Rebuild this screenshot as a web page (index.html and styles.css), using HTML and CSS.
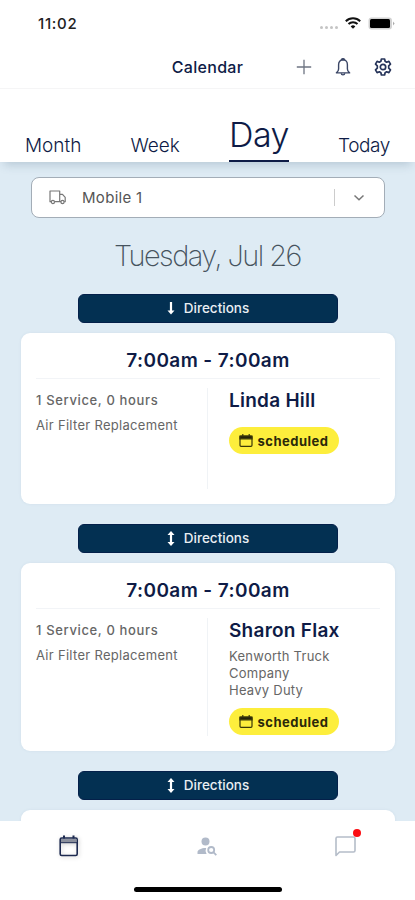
FILE: index.html
```html
<!DOCTYPE html>
<html lang="en">
<head>
    <meta charset="UTF-8">
    <meta name="viewport" content="width=device-width, initial-scale=1.0">
    <title>Calendar</title>
    <link rel="stylesheet" href="styles.css">
</head>
<body>

    <!-- Status Bar -->
    <div class="status-bar">
        <span class="clock">11:02</span>
        <div class="status-icons">
            <div class="signal"><i></i><i></i><i></i><i></i></div>
            <svg class="wifi" width="16" height="12" viewBox="0 0 16 12" fill="none" stroke="#111" stroke-width="2">
                <path d="M0.8 4.2a10.3 10.3 0 0 1 14.4 0"/>
                <path d="M3.5 7a6.5 6.5 0 0 1 9 0"/>
                <path d="M8 11.8L5.7 9.4a3.4 3.4 0 0 1 4.6 0z" fill="#111" stroke="none"/>
            </svg>
            <svg width="27" height="13" viewBox="0 0 27 13">
                <rect x="0.5" y="0.5" width="23.5" height="12" rx="3" fill="#d2d2d2"/>
                <rect x="2" y="2" width="20" height="9" rx="1.5" fill="#000"/>
                <path d="M25 4.5v4l1.6-2z" fill="#aaa"/>
            </svg>
        </div>
    </div>

    <!-- Header -->
    <header class="header">
        <h1>Calendar</h1>
        <div class="header-icons">
            <svg width="16" height="16" viewBox="0 0 16 16" fill="none" stroke="#6d7482" stroke-width="1.3">
                <path d="M8 0.8v14.4M0.8 8h14.4"/>
            </svg>
            <svg width="18" height="20" viewBox="0 0 18 20" fill="none" stroke="#3b4666" stroke-width="1.4" stroke-linejoin="round">
                <path d="M9 2.8c-2.9 0-4.4 2.2-4.4 4.9V12c0 1.8-.8 2.8-2.2 3.9h13.2c-1.4-1.1-2.2-2.1-2.2-3.9V7.7c0-2.7-1.5-4.9-4.4-4.9z"/>
                <path d="M7.4 2.7a1.7 1.5 0 0 1 3.2 0z" fill="#12204e"/>
                <path d="M7.3 16.2a1.7 1.7 0 0 0 3.4 0"/>
            </svg>
            <svg width="18" height="18" viewBox="0 0 18 18" fill="none" stroke="#26345a" stroke-width="1.7" stroke-linejoin="round">
                <path d="M7.4 1h3.2l.5 2.3 1.5.9 2.3-.8 1.6 2.8-1.8 1.6v2.4l1.8 1.6-1.6 2.8-2.3-.8-1.5.9-.5 2.3H7.4l-.5-2.3-1.5-.9-2.3.8-1.6-2.8 1.8-1.6V7.8L1.5 6.2l1.6-2.8 2.3.8 1.5-.9z"/>
                <circle cx="9" cy="9" r="2.7"/>
            </svg>
        </div>
    </header>

    <!-- View Tabs -->
    <nav class="tabs">
        <a class="tab">Month</a>
        <a class="tab">Week</a>
        <a class="tab active">Day</a>
        <a class="tab today">Today</a>
    </nav>

    <!-- Day Schedule -->
    <main class="schedule">
        <div class="vehicle-select">
            <svg width="17" height="15" viewBox="0 0 17 15" fill="none" stroke="#777" stroke-width="1.2" stroke-linejoin="round">
                <path d="M2.3 11.7H1V1h9.7v10.7H5.6M10.7 4.3h2.8l2.7 3v4.4h-1M10.7 11.7h1.3"/>
                <circle cx="3.9" cy="12" r="1.6"/>
                <circle cx="13.5" cy="12" r="1.6"/>
            </svg>
            <span class="vehicle-name">Mobile 1</span>
            <span class="separator"></span>
            <svg width="12" height="8" viewBox="0 0 12 8" fill="none" stroke="#777" stroke-width="1.5">
                <path d="M1.5 1.5L6 5.7l4.5-4.2"/>
            </svg>
        </div>

        <h2 class="date">Tuesday, Jul 26</h2>

        <button class="directions-btn">
            <svg width="8" height="15" viewBox="0 0 8 15" fill="#fff">
                <path d="M2.9 1h2.2v8.5h2.4L4 13.5.5 9.5h2.4z"/>
            </svg>
            <span>Directions</span>
        </button>

        <div class="card">
            <h3 class="card-time">7:00am - 7:00am</h3>
            <div class="card-body">
                <div class="services">
                    <p class="summary">1 Service, 0 hours</p>
                    <p>Air Filter Replacement</p>
                </div>
                <div class="customer">
                    <h4>Linda Hill</h4>
                    <span class="badge">
                        <svg width="14" height="13" viewBox="0 0 14 13" fill="none" stroke="#3a3808" stroke-width="1.2">
                            <rect x="1" y="2" width="12" height="10.3" rx="1"/>
                            <path d="M1 2h12v2.8H1zM3.8 0v2M10.2 0v2" fill="#24220a"/>
                        </svg>
                        <span>scheduled</span>
                    </span>
                </div>
            </div>
        </div>

        <button class="directions-btn">
            <svg width="8" height="15" viewBox="0 0 8 15" fill="#fff">
                <path d="M4 0l3.5 4H5.1v7h2.4L4 15 .5 11h2.4V4H.5z"/>
            </svg>
            <span>Directions</span>
        </button>

        <div class="card card-tall">
            <h3 class="card-time">7:00am - 7:00am</h3>
            <div class="card-body">
                <div class="services">
                    <p class="summary">1 Service, 0 hours</p>
                    <p>Air Filter Replacement</p>
                </div>
                <div class="customer">
                    <h4>Sharon Flax</h4>
                    <p class="company">Kenworth Truck Company<br>Heavy Duty</p>
                    <span class="badge">
                        <svg width="14" height="13" viewBox="0 0 14 13" fill="none" stroke="#3a3808" stroke-width="1.2">
                            <rect x="1" y="2" width="12" height="10.3" rx="1"/>
                            <path d="M1 2h12v2.8H1zM3.8 0v2M10.2 0v2" fill="#24220a"/>
                        </svg>
                        <span>scheduled</span>
                    </span>
                </div>
            </div>
        </div>

        <button class="directions-btn">
            <svg width="8" height="15" viewBox="0 0 8 15" fill="#fff">
                <path d="M4 0l3.5 4H5.1v7h2.4L4 15 .5 11h2.4V4H.5z"/>
            </svg>
            <span>Directions</span>
        </button>

        <div class="card"></div>
    </main>

    <!-- Bottom Navigation -->
    <footer class="bottom-nav">
        <div class="nav-items">
            <a class="nav-item nav-calendar">
                <svg width="20" height="22" viewBox="0 0 20 22" fill="none" stroke="#1d2a50">
                    <rect x="1.2" y="3" width="17" height="17.5" rx="1.5" stroke-width="1.6"/>
                    <path d="M5 0.5v3M14.5 0.5v3" stroke-width="2"/>
                    <path d="M2 5.8h15.5" stroke="#8a8f9c" stroke-width="3.5"/>
                    <path d="M1.2 7.7h17" stroke-width="1"/>
                </svg>
            </a>
            <a class="nav-item">
                <svg width="20" height="19" viewBox="0 0 20 19" fill="#b1bac9">
                    <circle cx="8.5" cy="4.5" r="4"/>
                    <path d="M0.5 17v-2c0-2.6 4.5-4.3 8.7-4.1a6 6 0 0 0 .4 6.1z"/>
                    <circle cx="14.2" cy="13" r="3" fill="none" stroke="#b1bac9" stroke-width="1.8"/>
                    <path d="M16.3 15.1l3 3" stroke="#b1bac9" stroke-width="1.8"/>
                </svg>
            </a>
            <a class="nav-item nav-chat">
                <svg width="21" height="21" viewBox="0 0 21 21" fill="none" stroke="#b5bdc9" stroke-width="1.6" stroke-linejoin="round">
                    <path d="M2.5 1h16a1.5 1.5 0 0 1 1.5 1.5v12a1.5 1.5 0 0 1-1.5 1.5H4.5L1 19.500v-17A1.5 1.5 0 0 1 2.5 1z"/>
                </svg>
                <span class="dot"></span>
            </a>
        </div>
        <div class="home-indicator"></div>
    </footer>

</body>
</html>
```
FILE: styles.css
```css
/* General Styling */
* {
    box-sizing: border-box;
}

body {
    font-family: Inter, "Liberation Sans", sans-serif;
    background-color: #fff;
    margin: 0;
    height: 900px;
    display: flex;
    flex-direction: column;
    overflow: hidden;
    color: #0e1b46;
}

h1, h2, h3, h4, p {
    margin: 0;
}

svg {
    display: block;
    flex-shrink: 0;
}

/* Status Bar */
.status-bar {
    height: 46px;
    padding: 0 20px 0 38px;
    display: flex;
    align-items: center;
    justify-content: space-between;
}

.clock {
    font-size: 15px;
    font-weight: 500;
    letter-spacing: 0.7px;
    color: #222;
}

.status-icons {
    display: flex;
    align-items: center;
}

.signal {
    display: flex;
    gap: 2px;
    margin: 8px 7px 0 0;
}

.signal i {
    width: 3px;
    height: 3px;
    border-radius: 50%;
    background-color: #c4c4c4;
}

.wifi {
    margin-right: 7px;
}

/* Header */
.header {
    height: 43px;
    display: grid;
    grid-template-columns: 1fr auto 1fr;
    align-items: center;
    border-bottom: 1px solid #f5f5f6;
}

.header h1 {
    grid-column: 2;
    font-size: 16px;
    font-weight: 500;
    line-height: 20px;
    letter-spacing: 0.3px;
}

.header-icons {
    display: flex;
    align-items: center;
    justify-content: flex-end;
    gap: 22px;
    padding-right: 23px;
}

/* View Tabs */
.tabs {
    position: relative;
    height: 73px;
    flex-shrink: 0;
    padding: 0 25px;
    display: flex;
    justify-content: space-between;
    align-items: flex-end;
    background-color: #fff;
    box-shadow: 0 7px 9px -4px rgba(50, 80, 110, 0.22);
}

.tab {
    font-size: 19px;
    font-weight: 300;
    line-height: 24px;
    padding-bottom: 4px;
}

.tab.active {
    font-size: 34px;
    line-height: 40px;
    letter-spacing: -0.5px;
    padding-bottom: 5px;
    border-bottom: 2px solid #0e1b46;
}

.tab.today {
    letter-spacing: -0.4px;
}

/* Day Schedule */
.schedule {
    height: 659px;
    flex-shrink: 0;
    overflow: hidden;
    padding: 15px 20px 0 21px;
    display: flex;
    flex-direction: column;
    align-items: center;
    background-color: #deebf4;
}

.vehicle-select {
    width: 354px;
    height: 41px;
    flex-shrink: 0;
    padding: 0 19px 0 17px;
    display: flex;
    align-items: center;
    background-color: #fff;
    border: 1px solid #a3adb7;
    border-radius: 8px;
}

.vehicle-name {
    margin-left: 16px;
    font-size: 15px;
    letter-spacing: 0.3px;
    color: #555;
}

.separator {
    width: 1px;
    height: 17px;
    margin: 0 18px 0 auto;
    background-color: #ccc;
}

.date {
    margin: 19px 1px 20px 0;
    font-size: 29px;
    font-weight: 200;
    line-height: 37px;
    letter-spacing: -1.55px;
    color: #46535e;
}

.directions-btn {
    width: 260px;
    height: 29px;
    flex-shrink: 0;
    margin: 0 0 10px;
    padding: 0 0 1px;
    display: flex;
    align-items: center;
    justify-content: center;
    gap: 9px;
    font-family: inherit;
    font-size: 13.5px;
    font-weight: 500;
    color: #e9eef3;
    background-color: #033052;
    border: 1px solid #04204a;
    border-radius: 6px;
}

/* Appointment Cards */
.card {
    width: 374px;
    height: 171px;
    flex-shrink: 0;
    margin-bottom: 20px;
    padding: 16px 15px 15px;
    display: flex;
    flex-direction: column;
    background-color: #fff;
    border-radius: 9px;
    box-shadow: 0 0 3px rgba(90, 130, 160, 0.1);
}

.card-tall {
    height: 188px;
}

.card-time {
    font-size: 19px;
    font-weight: 600;
    line-height: 24px;
    letter-spacing: 0.4px;
    padding-bottom: 5px;
    text-align: center;
    border-bottom: 1px solid #f2f4f7;
}

.card-body {
    flex: 1;
    margin-top: 9px;
    display: flex;
}

.services {
    width: 172px;
    border-right: 1px solid #f0f3f6;
    font-size: 13px;
    line-height: 25px;
    letter-spacing: 0.3px;
    color: #666;
    white-space: nowrap;
}

.services .summary {
    font-weight: 500;
    letter-spacing: 0.65px;
}

.customer {
    flex: 1;
    padding-left: 21px;
}

.customer h4 {
    font-size: 19px;
    font-weight: 600;
    line-height: 26px;
    letter-spacing: 0.25px;
}

.company {
    width: 120px;
    margin-top: 4px;
    font-size: 13px;
    line-height: 17px;
    letter-spacing: 0.25px;
    color: #666;
}

.badge {
    width: 110px;
    height: 27px;
    margin-top: 13px;
    display: flex;
    align-items: center;
    justify-content: center;
    gap: 4px;
    font-size: 13px;
    font-weight: 700;
    letter-spacing: 0.5px;
    color: #2b290a;
    background-color: #fdee3c;
    border-radius: 14px;
}

.company + .badge {
    margin-top: 9px;
}

/* Bottom Navigation */
.bottom-nav {
    height: 79px;
    flex-shrink: 0;
    display: flex;
    flex-direction: column;
    align-items: center;
    background-color: #fff;
}

.nav-items {
    width: 100%;
    height: 50px;
    display: grid;
    grid-template-columns: repeat(3, 1fr);
}

.nav-item {
    display: flex;
    align-items: center;
    justify-content: center;
}

.nav-calendar svg {
    filter: drop-shadow(1px 1px 2px rgba(0, 0, 0, 0.2));
}

.nav-chat {
    position: relative;
}

.dot {
    position: absolute;
    top: 8px;
    right: 54px;
    width: 8px;
    height: 8px;
    border-radius: 50%;
    background-color: #fb0d12;
}

.home-indicator {
    width: 148px;
    height: 5px;
    margin: 16px 0 0 1px;
    border-radius: 3px;
    background-color: #000;
}
```
